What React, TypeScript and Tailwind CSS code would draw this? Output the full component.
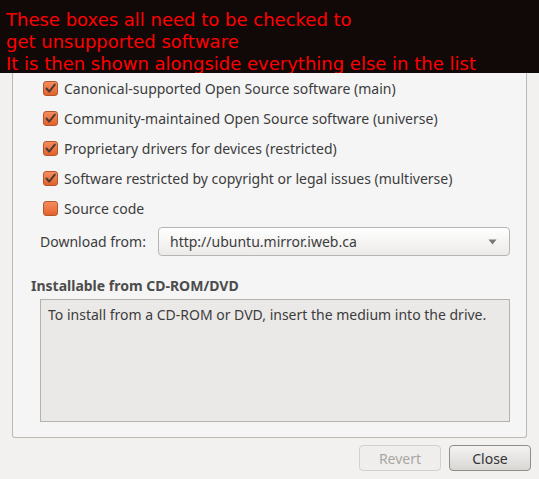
import React from 'react';

const uiFont = { fontFamily: '"Noto Sans", "Open Sans", sans-serif' };

const sources = [
  { label: 'Canonical-supported Open Source software (main)', checked: true },
  { label: 'Community-maintained Open Source software (universe)', checked: true },
  { label: 'Proprietary drivers for devices (restricted)', checked: true },
  { label: 'Software restricted by copyright or legal issues (multiverse)', checked: true },
  { label: 'Source code', checked: false },
];

const CheckBox = ({ checked }: { checked: boolean }) => (
  <span className="w-[15px] h-[15px] rounded-[3px] border border-[#b5562c] bg-gradient-to-b from-[#f48d5c] to-[#e2622c] flex items-center justify-center shrink-0">
    {checked && (
      <svg width="13" height="13" viewBox="0 0 13 13">
        <path d="M2.5 6.5 L5.2 9.6 L10.8 2.6" fill="none" stroke="#4a3a33" strokeWidth="2" strokeLinecap="round" strokeLinejoin="round" />
      </svg>
    )}
  </span>
);

export default function App() {
  return (
    <div className="w-[539px] h-[479px] bg-[#f2f1f0] overflow-hidden text-[#3c3c3c]" style={uiFont}>
      {/* annotation band, pasted over the top of the dialog */}
      <div className="h-[73px] bg-[#110808] overflow-hidden pt-[9px] pl-[6px] text-[18px] leading-[22px] text-[#ff0000] whitespace-nowrap" style={{ fontFamily: '"DejaVu Sans", sans-serif' }}>
        <div>These boxes all need to be checked to</div>
        <div>get unsupported software</div>
        <div>It is then shown alongside everything else in the list</div>
      </div>

      {/* tab panel */}
      <div className="mx-[12px] bg-[#f5f5f5] border-x border-b border-[#bcb9b5] rounded-b-[3px] pb-[15px]">
        <div className="flex flex-col">
          {sources.map((s) => (
            <div key={s.label} className="h-[30px] flex items-center gap-[6px] pl-[30px] text-[14px] whitespace-nowrap">
              <CheckBox checked={s.checked} />
              <span>{s.label}</span>
            </div>
          ))}
        </div>

        <div className="mt-[4px] flex items-center pl-[27px] pr-[16px] text-[14px]">
          <span className="w-[118px] shrink-0">Download from:</span>
          <div className="flex-1 h-[29px] rounded-[4px] border border-[#b8b5b1] bg-gradient-to-b from-[#ffffff] to-[#ebeae8] flex items-center pl-[11px] pr-[12px]">
            <span className="flex-1">http://ubuntu.mirror.iweb.ca</span>
            <svg width="9" height="6" viewBox="0 0 9 6">
              <path d="M0.5 0.5 L8.5 0.5 L4.5 5.5 Z" fill="#7a7875" />
            </svg>
          </div>
        </div>

        <div className="mt-[19px] pl-[18px] text-[14px] font-bold text-[#4c4c4c]">Installable from CD-ROM/DVD</div>

        <div className="mt-[3px] ml-[27px] mr-[16px] h-[123px] bg-[#ebe9e7] border border-[#b5b2ae] px-[7px] pt-[4px] text-[14px]">
          To install from a CD-ROM or DVD, insert the medium into the drive.
        </div>
      </div>

      {/* dialog buttons */}
      <div className="mt-[7px] flex justify-end gap-[8px] pr-[8px]">
        <button className="w-[82px] h-[26px] rounded-[4px] border border-[#d3d1ce] bg-[#efeeec] text-[14px] text-[#a8a6a3]">Revert</button>
        <button className="w-[82px] h-[26px] rounded-[4px] border border-[#8f8d8a] bg-gradient-to-b from-[#f4f3f2] to-[#d9d7d4] text-[14px] text-[#333333]">Close</button>
      </div>
    </div>
  );
}
